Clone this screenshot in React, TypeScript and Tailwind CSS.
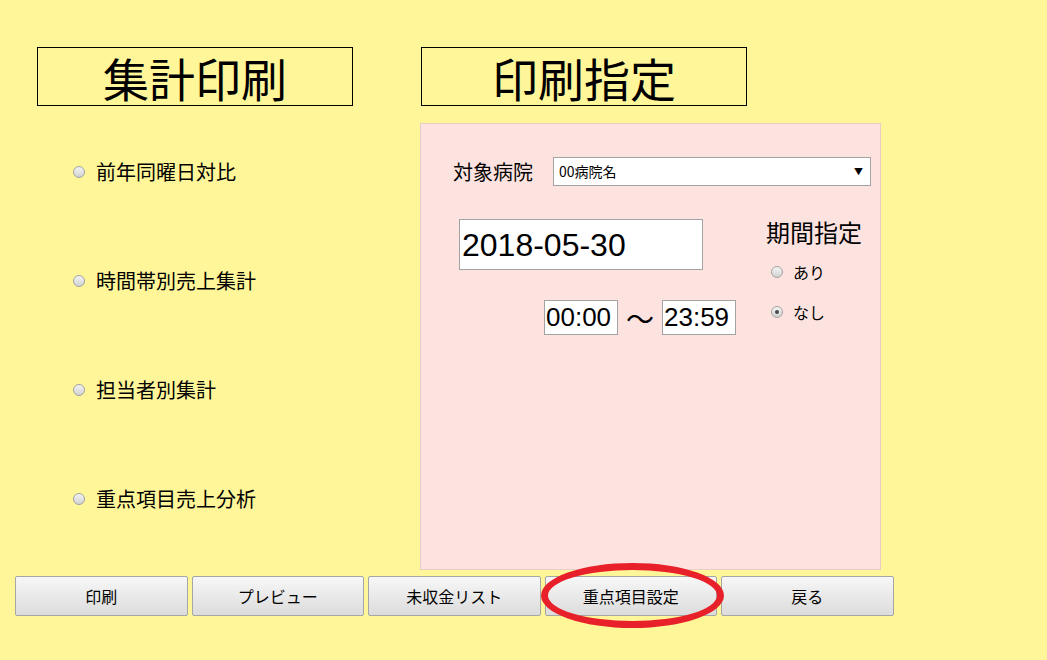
import { ReactNode } from "react";

const jp = { fontFamily: '"Noto Sans CJK JP", "Liberation Sans", sans-serif' };
const num = { fontFamily: '"Liberation Sans", "Noto Sans CJK JP", sans-serif' };

function Radio({ checked = false }: { checked?: boolean }) {
  return (
    <span className="flex h-[12px] w-[12px] shrink-0 items-center justify-center rounded-full border border-[#a3a3a3] bg-gradient-to-b from-[#f4f4f4] to-[#d2d2d2]">
      {checked && <span className="h-[4px] w-[4px] rounded-full bg-[#4a4a4a]" />}
    </span>
  );
}

function TitleBox({ children, width }: { children: ReactNode; width: string }) {
  return (
    <div
      className={`flex h-[59px] items-center justify-center border border-black text-[46px] leading-none text-black ${width}`}
      style={jp}
    >
      {children}
    </div>
  );
}

const reports = ["前年同曜日対比", "時間帯別売上集計", "担当者別集計", "重点項目売上分析"];
const buttons = ["印刷", "プレビュー", "未収金リスト", "重点項目設定", "戻る"];

export default function App() {
  return (
    <div className="relative h-[660px] w-[1047px] overflow-hidden bg-[#fef699] text-black" style={jp}>
      <div className="flex pt-[47px]">
        {/* left column */}
        <div className="ml-[37px] w-[316px]">
          <TitleBox width="w-[316px]">集計印刷</TitleBox>
          <div className="mt-[11px]">
            {reports.map((r) => (
              <div key={r} className="flex h-[109px] items-center pl-[36px]">
                <Radio />
                <span className="ml-[11px] text-[20px] leading-none">{r}</span>
              </div>
            ))}
          </div>
        </div>

        {/* right column */}
        <div className="ml-[67px] w-[461px]">
          <div className="ml-[1px]">
            <TitleBox width="w-[326px]">印刷指定</TitleBox>
          </div>
          <div className="mt-[17px] h-[447px] border border-[#ecccc6] bg-[#fde3df]">
            <div className="flex items-center pl-[32px] pt-[33px]">
              <span className="w-[100px] text-[20px] leading-none">対象病院</span>
              <div className="flex h-[29px] w-[318px] items-center justify-between border border-[#a3a3a3] bg-white pl-[5px] pr-[7px]">
                <span className="text-[14px]">00病院名</span>
                <span className="text-[9px]">▼</span>
              </div>
            </div>

            <div className="flex items-start">
              <div className="ml-[38px] mt-[33px] w-[307px]">
                <div
                  className="flex h-[51px] w-[244px] items-center border border-[#a3a3a3] bg-white pl-[2px] text-[32px]"
                  style={num}
                >
                  2018-05-30
                </div>
                <div className="ml-[85px] mt-[30px] flex items-center" style={num}>
                  <div className="flex h-[35px] w-[74px] items-center border border-[#a3a3a3] bg-white pl-[1px] text-[26px]">
                    00:00
                  </div>
                  <span className="mx-[8px] text-[28px] leading-none" style={jp}>
                    〜
                  </span>
                  <div className="flex h-[35px] w-[74px] items-center border border-[#a3a3a3] bg-white pl-[1px] text-[26px]">
                    23:59
                  </div>
                </div>
              </div>

              <div className="mt-[34px]">
                <div className="text-[24px] leading-none">期間指定</div>
                <div className="ml-[5px] mt-[20px] flex items-center">
                  <Radio />
                  <span className="ml-[10px] text-[16px] leading-none">あり</span>
                </div>
                <div className="ml-[5px] mt-[24px] flex items-center">
                  <Radio checked />
                  <span className="ml-[10px] text-[16px] leading-none">なし</span>
                </div>
              </div>
            </div>
          </div>
        </div>
      </div>

      {/* bottom buttons */}
      <div className="ml-[15px] mt-[6px] flex gap-[4px]">
        {buttons.map((b) => (
          <button
            key={b}
            className="h-[40px] w-[172.5px] rounded-[2px] border border-[#a6a6a6] bg-gradient-to-b from-[#f7f7f7] to-[#dcdcdc] text-[16px] text-black"
            style={jp}
          >
            {b}
          </button>
        ))}
      </div>

      {/* red highlight ellipse */}
      <div className="pointer-events-none absolute left-[541px] top-[563px] h-[65px] w-[183px] rounded-[50%] border-[7px] border-[#e8202a]" />
    </div>
  );
}
